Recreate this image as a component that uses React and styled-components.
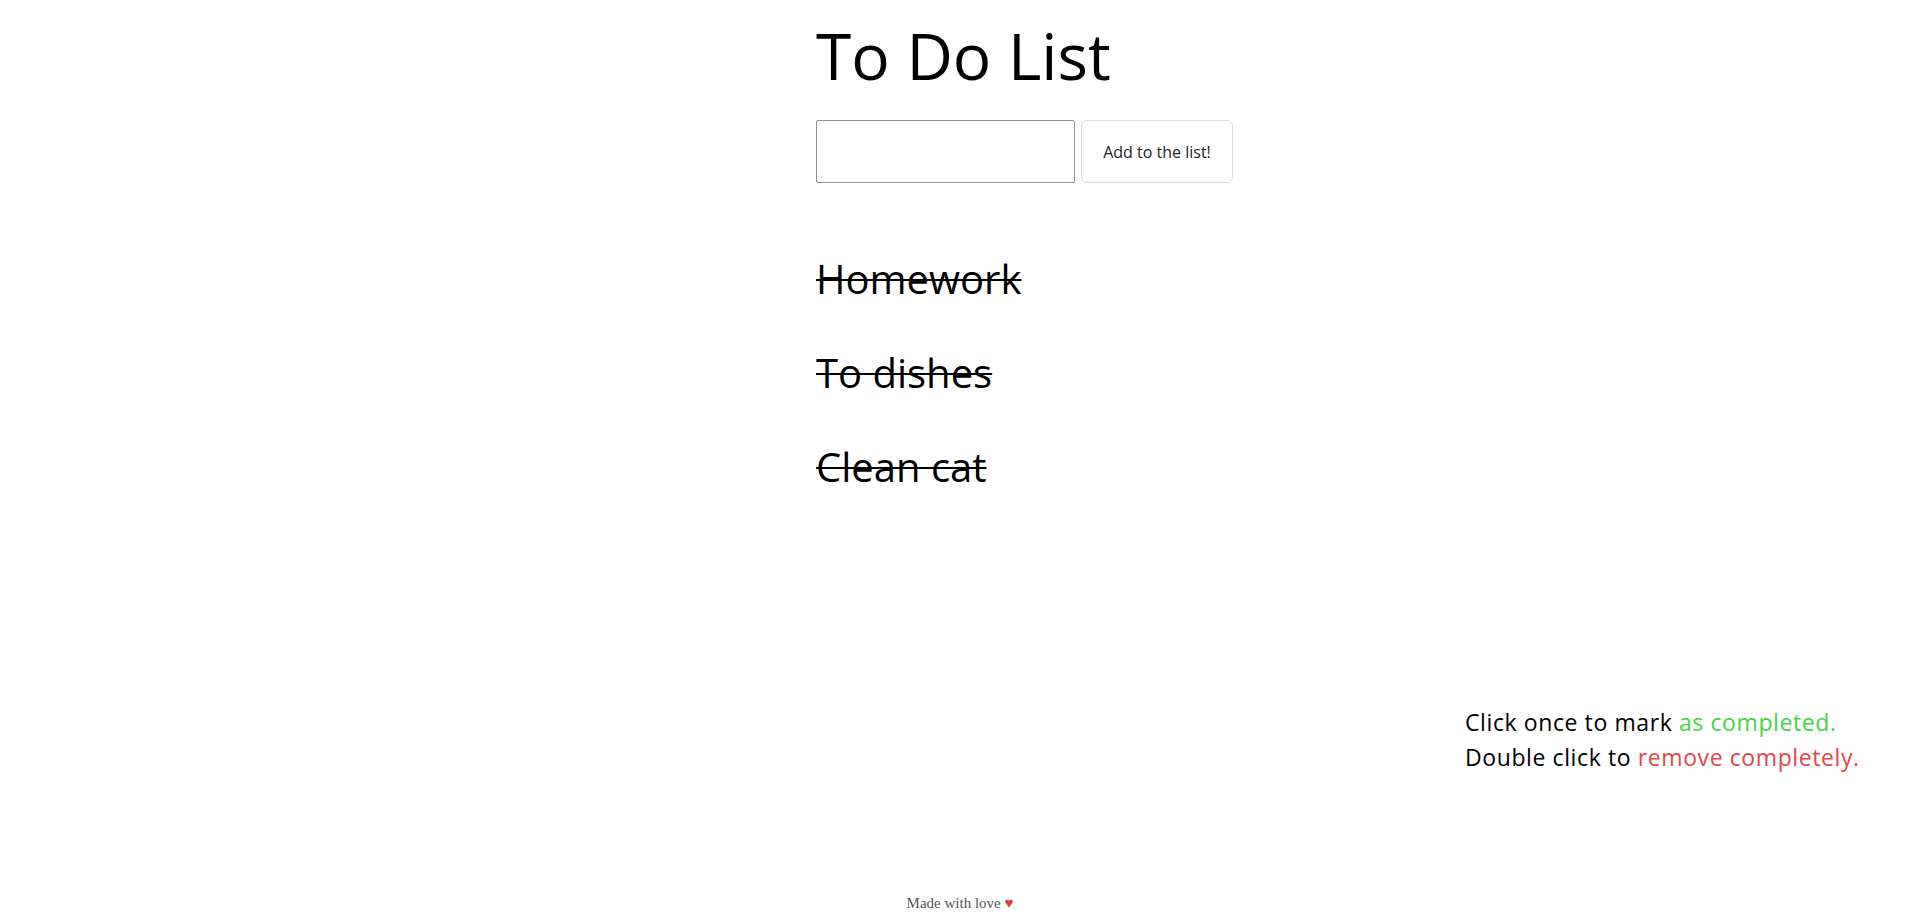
import React, { useState } from 'react';
import styled, { createGlobalStyle } from 'styled-components';

const GlobalStyle = createGlobalStyle`
  html, body {
    margin: 0;
    padding: 0;
    background: #fff;
  }
  body {
    font-family: "Open Sans", "Noto Sans", sans-serif;
    color: #000;
  }
`;

const Page = styled.div`
  height: 100vh;
  box-sizing: border-box;
  display: flex;
  flex-direction: column;
  overflow: hidden;
`;

const Main = styled.main`
  width: 288px;
  margin: 0 auto;
  display: flex;
  flex-direction: column;
  align-items: flex-start;
`;

const Title = styled.h1`
  margin: 12px 0 0;
  font-size: 64px;
  font-weight: 400;
  line-height: 88px;
  white-space: nowrap;
`;

const Form = styled.form`
  display: flex;
  gap: 6px;
  margin-top: 20px;
`;

const Input = styled.input`
  width: 259px;
  height: 63px;
  box-sizing: border-box;
  border: 1px solid #8d8d9c;
  border-radius: 2px;
  padding: 0 12px;
  font-size: 18px;
  font-family: inherit;
  outline: none;
`;

const AddButton = styled.button`
  width: 152px;
  height: 63px;
  box-sizing: border-box;
  border: 1px solid #dcdcdf;
  border-radius: 6px;
  background: #fff;
  color: #222;
  font-family: inherit;
  font-size: 16px;
  white-space: nowrap;
  cursor: pointer;
`;

const List = styled.ul`
  list-style: none;
  margin: 68px 0 0;
  padding: 0;
  display: flex;
  flex-direction: column;
  gap: 38px;
`;

const Item = styled.li`
  font-size: 40px;
  line-height: 56px;
  white-space: nowrap;
  cursor: pointer;
  text-decoration: ${(p) => (p.$done ? 'line-through' : 'none')};
  text-decoration-thickness: 2px;
`;

const Spacer = styled.div`
  flex: 1;
`;

const Hint = styled.div`
  align-self: flex-end;
  width: 400px;
  margin-right: 55px;
  font-size: 23px;
  letter-spacing: 0.6px;
  line-height: 35px;
  white-space: nowrap;
`;

const Accent = styled.span`
  color: ${(p) => p.$color};
`;

const Footer = styled.footer`
  margin-top: 118px;
  padding-bottom: 8px;
  text-align: center;
  font-family: "Liberation Serif", serif;
  font-size: 15px;
  line-height: 20px;
  color: #555;
`;

const Heart = styled.span`
  color: #e0393e;
`;

const initialTodos = [
  { id: 1, text: 'Homework', done: true },
  { id: 2, text: 'To dishes', done: true },
  { id: 3, text: 'Clean cat', done: true },
];

export default function App() {
  const [todos, setTodos] = useState(initialTodos);
  const [value, setValue] = useState('');

  const addTodo = (e) => {
    e.preventDefault();
    if (!value.trim()) return;
    setTodos([...todos, { id: Date.now(), text: value.trim(), done: false }]);
    setValue('');
  };

  const toggle = (id) =>
    setTodos(todos.map((t) => (t.id === id ? { ...t, done: !t.done } : t)));

  const remove = (id) => setTodos(todos.filter((t) => t.id !== id));

  return (
    <Page>
      <GlobalStyle />
      <Main>
        <Title>To Do List</Title>
        <Form onSubmit={addTodo}>
          <Input value={value} onChange={(e) => setValue(e.target.value)} />
          <AddButton type="submit">Add to the list!</AddButton>
        </Form>
        <List>
          {todos.map((t) => (
            <Item
              key={t.id}
              $done={t.done}
              onClick={() => toggle(t.id)}
              onDoubleClick={() => remove(t.id)}
            >
              {t.text}
            </Item>
          ))}
        </List>
      </Main>
      <Spacer />
      <Hint>
        <div>
          Click once to mark <Accent $color="#3fd63f">as completed.</Accent>
        </div>
        <div>
          Double click to <Accent $color="#e3454b">remove completely.</Accent>
        </div>
      </Hint>
      <Footer>
        Made with love <Heart>♥</Heart>
      </Footer>
    </Page>
  );
}
